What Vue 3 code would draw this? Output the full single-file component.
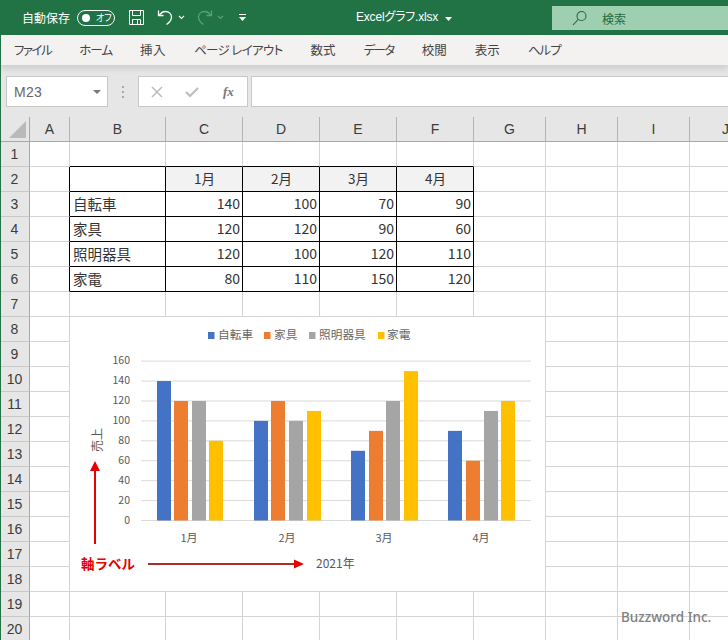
<script setup>
// 列幅と行番号。罫線は各セルの右・下ボーダーで引く
const cols = [
  { name: 'A', w: 40 },
  { name: 'B', w: 96 },
  { name: 'C', w: 77 },
  { name: 'D', w: 77 },
  { name: 'E', w: 77 },
  { name: 'F', w: 77 },
  { name: 'G', w: 72 },
  { name: 'H', w: 72 },
  { name: 'I', w: 72 },
  { name: 'J', w: 72 },
]
const gridCols = '30px ' + cols.map((c) => c.w + 'px').join(' ')
const rows = Array.from({ length: 20 }, (_, i) => i + 1)

// カタカナのタブは字詰めが強いので文字ごとに詰める
const tabs = [
  { label: 'ファイル', ls: -1.5 },
  { label: 'ホーム', ls: -1 },
  { label: '挿入', ls: 0.5 },
  { label: 'ページ レイアウト', ls: -0.65 },
  { label: '数式', ls: 0 },
  { label: 'データ', ls: -1.6 },
  { label: '校閲', ls: 0 },
  { label: '表示', ls: 0 },
  { label: 'ヘルプ', ls: -1 },
]

const table = {
  2: ['', '1月', '2月', '3月', '4月'],
  3: ['自転車', 140, 100, 70, 90],
  4: ['家具', 120, 120, 90, 60],
  5: ['照明器具', 120, 100, 120, 110],
  6: ['家電', 80, 110, 150, 120],
}

function cellText(r, c) {
  if (!table[r] || c < 1 || c > 5) return ''
  return table[r][c - 1]
}
function cellClass(r, c) {
  const inTable = r >= 2 && r <= 6 && c >= 1 && c <= 5
  return {
    boxed: inTable,
    'top-edge': r === 1 && c >= 1 && c <= 5,
    'left-edge': c === 0 && r >= 2 && r <= 6,
    month: r === 2 && c >= 2 && c <= 5,
    num: r >= 3 && r <= 6 && c >= 2 && c <= 5,
  }
}

// グラフ（座標はページ座標のまま viewBox でずらす）
const ticks = [0, 20, 40, 60, 80, 100, 120, 140, 160]
const y0 = 520.5
const yOf = (v) => y0 - v * 0.996
const colors = ['#4472c4', '#ed7d31', '#a5a5a5', '#ffc000']
const groups = [
  { label: '1月', cx: 189, xs: [157, 174, 192, 209], vals: [140, 120, 120, 80] },
  { label: '2月', cx: 287, xs: [254, 271, 289, 307], vals: [100, 120, 100, 110] },
  { label: '3月', cx: 384, xs: [351, 369, 386, 404], vals: [70, 90, 120, 150] },
  { label: '4月', cx: 481, xs: [448, 466, 484, 501], vals: [90, 60, 110, 120] },
]
const legend = [
  { label: '自転車', x: 208, tx: 218 },
  { label: '家具', x: 264, tx: 274 },
  { label: '照明器具', x: 309, tx: 319 },
  { label: '家電', x: 378, tx: 387 },
]
</script>

<template>
  <div class="page">
    <div class="titlebar">
      <span class="autosave">自動保存</span>
      <span class="toggle"><i class="knob"></i><span class="off">オフ</span></span>
      <svg class="qa save" width="17" height="17" viewBox="0 0 17 17" fill="none" stroke="#fff" stroke-width="1">
        <path d="M1.5 1.5h14v14h-14z" />
        <path d="M4.5 1.5v5h8v-5M4.5 15.5v-5h8v5M9.5 11v4" />
      </svg>
      <svg class="qa undo" width="17" height="17" viewBox="0 0 17 17" fill="none" stroke="#fff" stroke-width="1.3">
        <path d="M1.5 1.5v5h5M2 6.5c2-3 4-4 6.500-4 3.500 0 6 2.500 6 5.500 0 3-2 5.500-5 7.500" />
      </svg>
      <svg class="chev" width="7" height="5" viewBox="0 0 7 5" fill="none" stroke="#fff" stroke-width="1.2"><path d="M1 1l2.500 2.500L6 1" /></svg>
      <svg class="qa redo" width="17" height="17" viewBox="0 0 17 17" fill="none" stroke="#5e9c7c" stroke-width="1.3">
        <path d="M15.500 1.500v5h-5M15 6.500c-2-3-4-4-6.500-4-3.500 0-6 2.500-6 5.500 0 3 2 5.500 5 7.500" />
      </svg>
      <svg class="chev dim" width="7" height="5" viewBox="0 0 7 5" fill="none" stroke="#5e9c7c" stroke-width="1.2"><path d="M1 1l2.500 2.500L6 1" /></svg>
      <svg class="custom" width="9" height="9" viewBox="0 0 9 9" fill="#fff">
        <rect x="1" y="1" width="7" height="1" />
        <path d="M1 4h7L4.500 8z" />
      </svg>
      <span class="filename">Excelグラフ.xlsx</span>
      <svg class="caret" width="7" height="4" viewBox="0 0 7 4" fill="#fff"><path d="M0 0h7L3.500 4z" /></svg>
      <div class="search">
        <svg width="16" height="16" viewBox="0 0 16 16" fill="none" stroke="#1f6b42" stroke-width="1.1">
          <circle cx="9.500" cy="6" r="4.500" />
          <path d="M6.300 9.300L1 15" />
        </svg>
        <span>検索</span>
      </div>
    </div>

    <div class="tabs">
      <span
        v-for="t in tabs"
        :key="t.label"
        class="tab"
        :style="{ letterSpacing: t.ls + 'px' }"
      >{{ t.label }}</span>
    </div>

    <div class="formula">
      <div class="namebox">
        <span>M23</span>
        <svg width="8" height="4" viewBox="0 0 8 4" fill="#777"><path d="M0 0h8L4 4z" /></svg>
      </div>
      <div class="dots"><i></i><i></i><i></i></div>
      <div class="fx-btns">
        <svg width="12" height="12" viewBox="0 0 12 12" stroke="#bdbdbd" stroke-width="1.500"><path d="M1 1l10 10M11 1L1 11" /></svg>
        <svg width="14" height="12" viewBox="0 0 14 12" fill="none" stroke="#bdbdbd" stroke-width="2"><path d="M1 6l4 4 8-8" /></svg>
        <span class="fx">fx</span>
      </div>
      <div class="fx-input"></div>
    </div>

    <div class="sheet">
      <div class="grid" :style="{ gridTemplateColumns: gridCols }">
        <div class="corner"><i class="tri"></i></div>
        <div v-for="c in cols" :key="c.name" class="col-head">{{ c.name }}</div>
        <template v-for="r in rows" :key="r">
          <div class="row-head">{{ r }}</div>
          <div
            v-for="(c, ci) in cols"
            :key="c.name"
            class="cell"
            :class="cellClass(r, ci)"
          >{{ cellText(r, ci) }}</div>
        </template>
      </div>

      <svg class="chart" width="475" height="274" viewBox="70 317 475 274">
        <rect x="70" y="317" width="475" height="274" fill="#fff" />

        <g v-for="(l, i) in legend" :key="l.label">
          <rect :x="l.x" y="332" width="6.500" height="7" :fill="colors[i]" />
          <text :x="l.tx" y="339" class="legend">{{ l.label }}</text>
        </g>

        <g v-for="t in ticks" :key="t">
          <line x1="141" :y1="yOf(t)" x2="531" :y2="yOf(t)" class="gl" />
          <text x="130" :y="yOf(t) + 3" class="tick">{{ t }}</text>
        </g>

        <g v-for="g in groups" :key="g.label">
          <rect
            v-for="(v, i) in g.vals"
            :key="i"
            :x="g.xs[i]"
            :y="yOf(v)"
            width="14"
            :height="y0 - yOf(v)"
            :fill="colors[i]"
          />
          <text :x="g.cx" y="542" class="cat">{{ g.label }}</text>
        </g>

        <text transform="translate(102 440) rotate(-90)" class="axis-y">売上</text>
        <text x="316" y="568" class="axis-x">2021年</text>

        <line x1="95" y1="544" x2="95" y2="470" stroke="#e60000" stroke-width="2" />
        <path d="M95 461l-5 10h10z" fill="#e60000" />
        <text x="81" y="569" class="tag">軸ラベル</text>
        <line x1="148" y1="564" x2="295" y2="564" stroke="#b02a2a" stroke-width="2" />
        <path d="M304 564l-10-4.500v9z" fill="#e60000" />
      </svg>

      <span class="mark">Buzzword Inc.</span>
    </div>
  </div>
</template>

<style>
html,
body {
  margin: 0;
  background: #fff;
}
</style>

<style scoped>
.page {
  width: 728px;
  height: 640px;
  overflow: hidden;
  display: flex;
  flex-direction: column;
  font-family: 'Noto Sans CJK JP', 'Liberation Sans', sans-serif;
  color: #333;
  position: relative;
}
.page::after {
  content: '';
  position: absolute;
  left: 0;
  top: 0;
  bottom: 0;
  width: 1px;
  background: #217346;
  z-index: 2;
}
.titlebar {
  height: 35px;
  flex: none;
  background: #217346;
  color: #fff;
  display: flex;
  align-items: center;
  position: relative;
}
.autosave {
  margin-left: 22px;
  font-size: 12px;
  width: 49px;
  white-space: nowrap;
}
.toggle {
  margin-left: 6px;
  width: 38px;
  height: 16px;
  box-sizing: border-box;
  border: 1px solid #fff;
  border-radius: 8px;
  display: flex;
  align-items: center;
  padding-left: 4px;
  gap: 6px;
}
.knob {
  width: 8px;
  height: 8px;
  border-radius: 50%;
  background: #fff;
}
.off {
  font-size: 9px;
  line-height: 1;
  white-space: nowrap;
  font-feature-settings: 'palt';
}
.qa.save {
  margin-left: 13px;
}
.qa.undo {
  margin-left: 12px;
}
.chev {
  margin-left: 4px;
}
.qa.redo {
  margin-left: 11px;
}
.custom {
  margin-left: 14px;
}
.filename {
  position: absolute;
  left: 356px;
  top: 8px;
  font-size: 12px;
  line-height: 18px;
  font-family: 'Liberation Sans', 'Noto Sans CJK JP', sans-serif;
  font-feature-settings: 'palt';
  letter-spacing: -0.2px;
  white-space: nowrap;
}
.caret {
  position: absolute;
  left: 445px;
  top: 17px;
}
.search {
  position: absolute;
  left: 552px;
  top: 6px;
  width: 176px;
  height: 24px;
  background: #9fcfb1;
  color: #1f6b42;
  display: flex;
  align-items: center;
  gap: 14px;
  padding-left: 20px;
  box-sizing: border-box;
  font-size: 12px;
}
.tabs {
  height: 30px;
  flex: none;
  background: #f3f2f1;
  display: flex;
  align-items: center;
  gap: 28px;
  padding: 0 0 2px 14px;
  box-sizing: border-box;
  box-shadow: 0 4px 6px rgba(0, 0, 0, 0.1);
  position: relative;
  z-index: 1;
}
.tab {
  font-size: 12.500px;
  color: #444;
  white-space: nowrap;
  font-feature-settings: 'palt';
}
.formula {
  height: 52px;
  flex: none;
  background: #e6e6e6;
  display: flex;
  align-items: flex-start;
  padding: 11px 0 0 6px;
  box-sizing: border-box;
}
.namebox {
  width: 102px;
  height: 31px;
  box-sizing: border-box;
  background: #fff;
  border: 1px solid #c8c8c8;
  display: flex;
  align-items: center;
  justify-content: space-between;
  padding: 1px 6px 0 7px;
  font-size: 14px;
  letter-spacing: 0.3px;
  color: #666;
  font-family: 'Liberation Sans', sans-serif;
}
.dots {
  width: 30px;
  height: 31px;
  display: flex;
  flex-direction: column;
  align-items: center;
  justify-content: center;
  gap: 3px;
}
.dots i {
  width: 2px;
  height: 2px;
  background: #a8a8a8;
}
.fx-btns {
  width: 110px;
  height: 31px;
  box-sizing: border-box;
  background: #fff;
  border: 1px solid #c8c8c8;
  display: flex;
  align-items: center;
  gap: 22px;
  padding-left: 12px;
}
.fx {
  font-family: 'Liberation Serif', serif;
  font-style: italic;
  font-weight: 700;
  font-size: 13px;
  color: #777;
  margin-left: 2px;
}
.fx-input {
  margin-left: 3px;
  flex: 1;
  height: 31px;
  box-sizing: border-box;
  background: #fff;
  border: 1px solid #c8c8c8;
  border-right: 0;
}
.sheet {
  position: relative;
  flex: 1;
  min-height: 0;
}
.grid {
  display: grid;
  grid-auto-rows: 25px;
}
.corner,
.col-head,
.row-head {
  box-sizing: border-box;
  background: #e6e6e6;
  border-right: 1px solid #b4b4b4;
  border-bottom: 1px solid #a8a8a8;
  font-family: 'Liberation Sans', sans-serif;
  font-size: 14px;
  color: #3c3c3c;
  display: flex;
  align-items: center;
  justify-content: center;
  padding-bottom: 1px;
}
.row-head {
  border-bottom-color: #c8c8c8;
  border-right-color: #a8a8a8;
}
.corner {
  position: relative;
  border-right-color: #a8a8a8;
}
.tri {
  position: absolute;
  right: 3px;
  bottom: 3px;
  width: 0;
  height: 0;
  border-left: 17px solid transparent;
  border-bottom: 17px solid #b9b9b9;
}
.cell {
  box-sizing: border-box;
  border-right: 1px solid #d4d4d4;
  border-bottom: 1px solid #d4d4d4;
  font-size: 14.500px;
  color: #333;
  padding: 0 2px 2px 3px;
  display: flex;
  align-items: center;
  white-space: nowrap;
  overflow: hidden;
}
.cell.boxed {
  border-right-color: #000;
  border-bottom-color: #000;
}
.cell.top-edge {
  border-bottom-color: #000;
}
.cell.left-edge {
  border-right-color: #000;
}
.cell.month {
  background: #f2f2f2;
  justify-content: center;
  font-size: 13.500px;
}
.cell.num {
  justify-content: flex-end;
  font-size: 14px;
}
.chart {
  position: absolute;
  left: 70px;
  top: 200px;
  display: block;
}
.legend {
  font-size: 11.700px;
  fill: #666;
}
.gl {
  stroke: #d9d9d9;
  stroke-width: 1;
}
.tick {
  text-anchor: end;
  font-size: 10.500px;
  fill: #595959;
}
.cat {
  text-anchor: middle;
  font-size: 11px;
  fill: #595959;
}
.axis-y {
  text-anchor: middle;
  font-size: 12px;
  fill: #595959;
}
.axis-x {
  font-size: 12px;
  fill: #595959;
}
.tag {
  font-size: 13.500px;
  font-weight: 700;
  fill: #e60000;
}
.mark {
  position: absolute;
  left: 621px;
  top: 490px;
  font-family: 'Noto Sans', 'Liberation Sans', sans-serif;
  font-size: 13.500px;
  font-weight: 500;
  color: #808080;
  line-height: 20px;
  white-space: nowrap;
}
</style>
